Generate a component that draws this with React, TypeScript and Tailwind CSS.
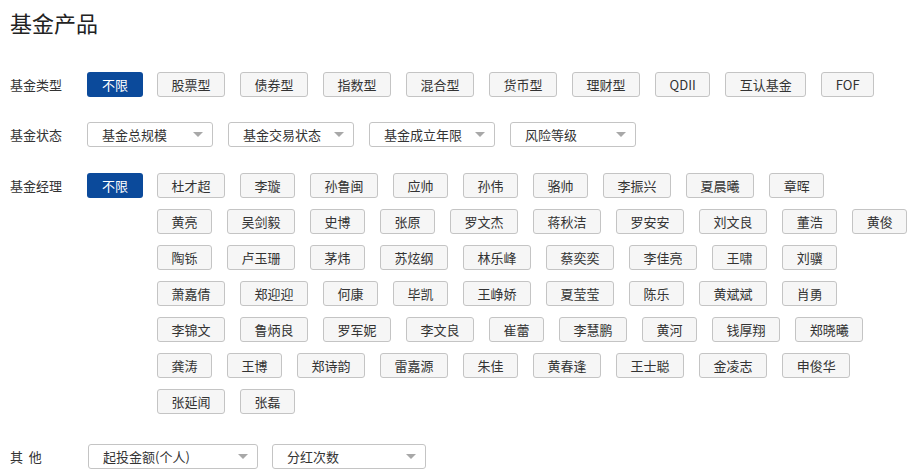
import React from "react";

const fundTypes = ["股票型", "债券型", "指数型", "混合型", "货币型", "理财型", "QDII", "互认基金", "FOF"];

const statusSelects = ["基金总规模", "基金交易状态", "基金成立年限", "风险等级"];

const managerRows = [
  ["杜才超", "李璇", "孙鲁闽", "应帅", "孙伟", "骆帅", "李振兴", "夏晨曦", "章晖"],
  ["黄亮", "吴剑毅", "史博", "张原", "罗文杰", "蒋秋洁", "罗安安", "刘文良", "董浩", "黄俊"],
  ["陶铄", "卢玉珊", "茅炜", "苏炫纲", "林乐峰", "蔡奕奕", "李佳亮", "王啸", "刘骥"],
  ["萧嘉倩", "郑迎迎", "何康", "毕凯", "王峥娇", "夏莹莹", "陈乐", "黄斌斌", "肖勇"],
  ["李锦文", "鲁炳良", "罗军妮", "李文良", "崔蕾", "李慧鹏", "黄河", "钱厚翔", "郑晓曦"],
  ["龚涛", "王博", "郑诗韵", "雷嘉源", "朱佳", "黄春逢", "王士聪", "金凌志", "申俊华"],
  ["张延闻", "张磊"],
];

function Chip({ label }: { label: string }) {
  return (
    <button className="h-[25px] shrink-0 rounded-[3px] border border-[#c4c4c4] bg-[#f6f6f6] px-[13.5px] text-[13px] leading-[23px] text-[#333]">
      {label}
    </button>
  );
}

function AllChip() {
  return (
    <button className="mr-[14px] h-[25px] w-[56px] shrink-0 rounded-[3px] bg-[#0b4a9b] text-[13px] leading-[25px] text-white">
      不限
    </button>
  );
}

function Select({ label, width }: { label: string; width: string }) {
  return (
    <div
      className={`flex h-[25px] items-center justify-between rounded-[3px] border border-[#c4c4c4] bg-white pl-[14px] pr-[9px] text-[13px] text-[#333] ${width}`}
    >
      <span>{label}</span>
      <span className="h-0 w-0 border-x-[5px] border-t-[5px] border-x-transparent border-t-[#a8a8a8]" />
    </div>
  );
}

function Label({ children }: { children: React.ReactNode }) {
  return <div className="w-[77px] shrink-0 text-[13px] leading-[25px] text-[#333]">{children}</div>;
}

export default function App() {
  return (
    <div
      className="h-[473px] w-[911px] overflow-hidden bg-white px-[10px] pt-[8px] text-[#333]"
      style={{ fontFamily: '"Noto Sans CJK SC", "Noto Sans", sans-serif' }}
    >
      <h1 className="text-[22px] leading-[28px] text-[#222]">基金产品</h1>

      <div className="mt-[36px] flex">
        <Label>基金类型</Label>
        <AllChip />
        <div className="flex gap-[15px]">
          {fundTypes.map((t) => (
            <Chip key={t} label={t} />
          ))}
        </div>
      </div>

      <div className="mt-[25px] flex">
        <Label>基金状态</Label>
        <div className="flex gap-[15px]">
          {statusSelects.map((s) => (
            <Select key={s} label={s} width="w-[126px]" />
          ))}
        </div>
      </div>

      <div className="mt-[26px] flex">
        <Label>基金经理</Label>
        <AllChip />
        <div className="flex flex-col gap-[11px]">
          {managerRows.map((row, i) => (
            <div key={i} className="flex gap-[15px]">
              {row.map((n) => (
                <Chip key={n} label={n} />
              ))}
            </div>
          ))}
        </div>
      </div>

      <div className="mt-[30px] flex">
        <Label>其&nbsp;&nbsp;他</Label>
        <div className="ml-px flex gap-[14px]">
          <Select label="起投金额(个人)" width="w-[170px]" />
          <Select label="分红次数" width="w-[154px]" />
        </div>
      </div>
    </div>
  );
}
